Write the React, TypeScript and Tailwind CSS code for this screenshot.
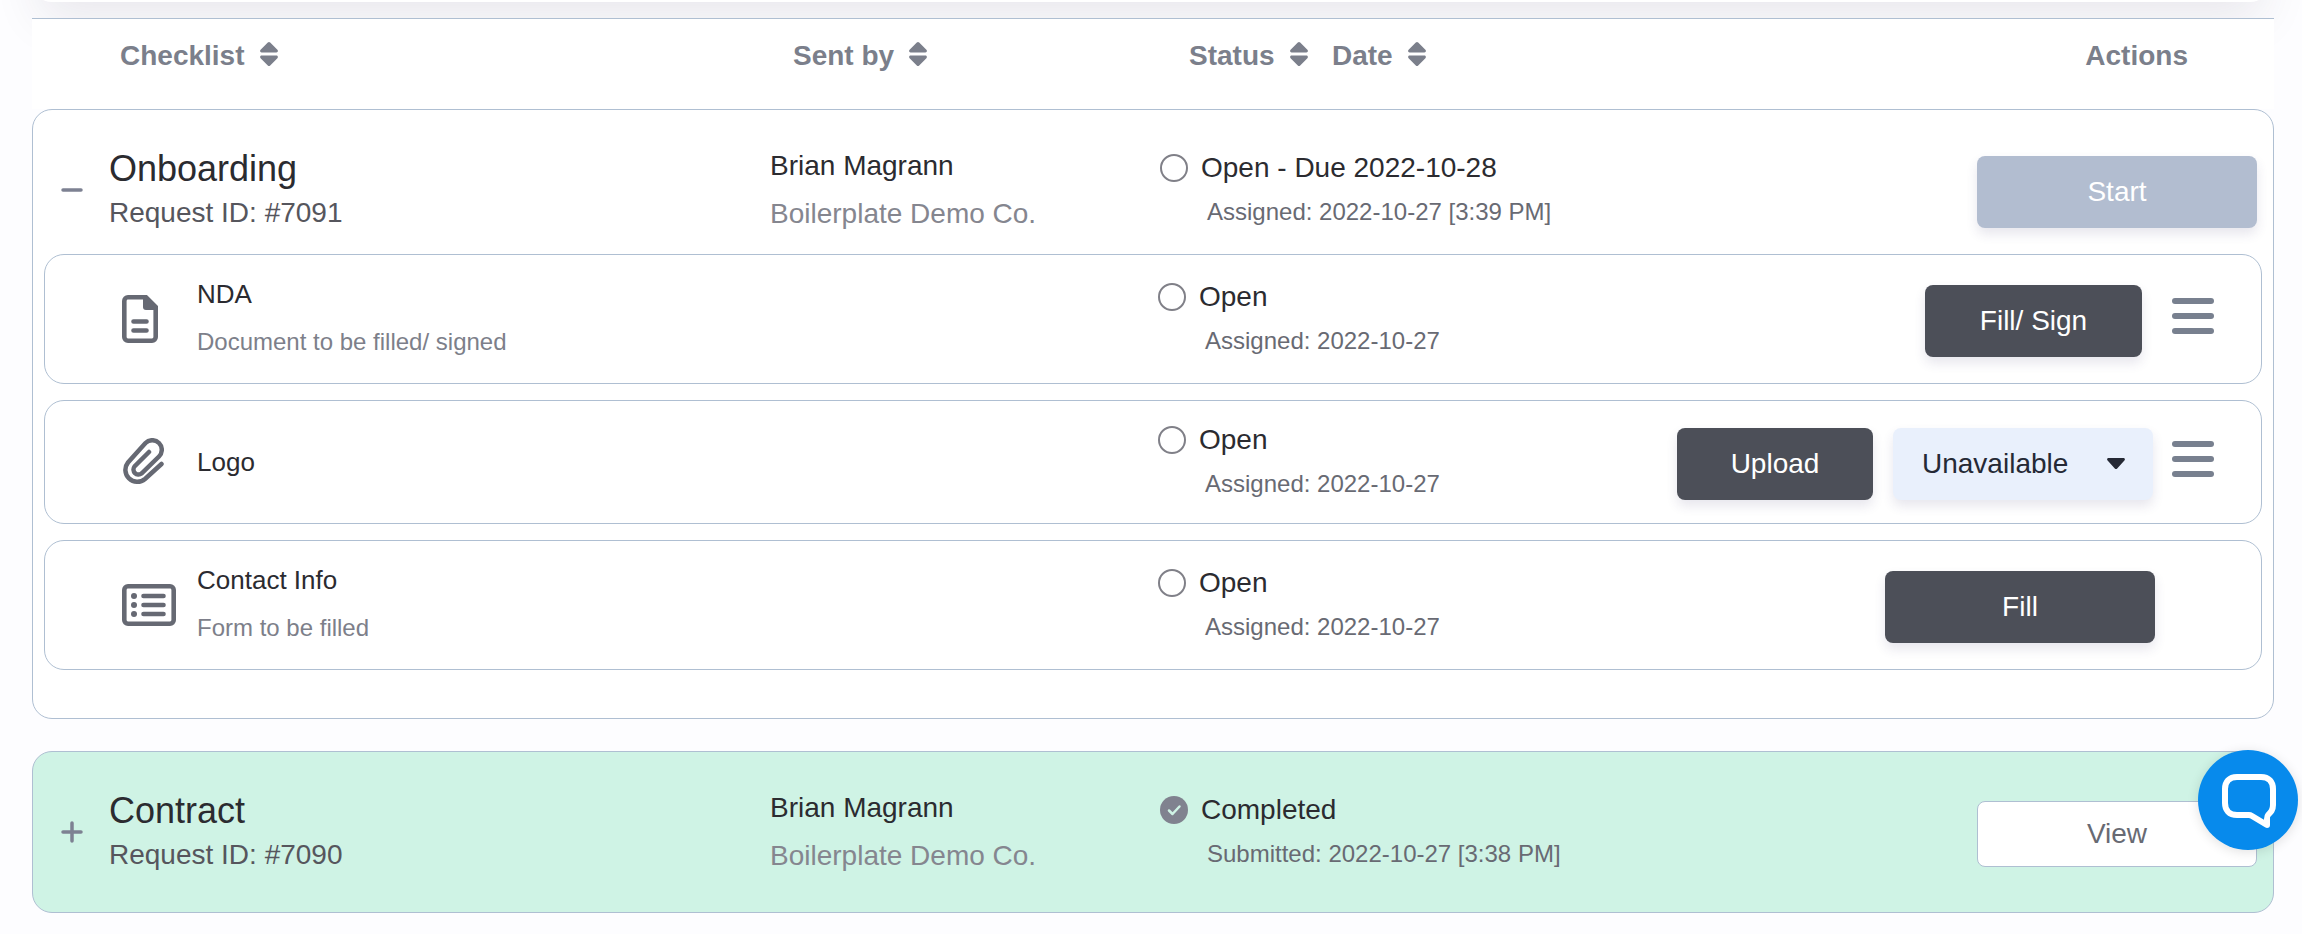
import type { ReactNode } from "react";

type Item = {
  name: string;
  note?: string;
  icon: ReactNode;
  actions: ReactNode;
};

function SortIcon() {
  return (
    <svg viewBox="0 0 18 36" className="h-9 w-[18px]" fill="currentColor" aria-hidden="true">
      <path d="M7.8 6.6a1.700 1.700 0 0 1 2.400 0l7.200 7.200c1 1 .4 2.600-1 2.600H1.600c-1.400 0-2-1.600-1-2.600z" />
      <path d="M7.800 29.400a1.700 1.700 0 0 0 2.400 0l7.200-7.200c1-1 .4-2.600-1-2.600H1.600c-1.400 0-2 1.600-1 2.600z" />
    </svg>
  );
}

function DocumentIcon() {
  return (
    <svg viewBox="0 0 36 48" className="h-12 w-9" fill="none" aria-hidden="true">
      <path d="M6 2.300h18l9.700 9.700v30a3.700 3.700 0 0 1-3.700 3.700H6A3.700 3.700 0 0 1 2.300 42V6A3.700 3.700 0 0 1 6 2.300z" stroke="currentColor" strokeWidth="4.600" />
      <path d="M21 2h4l9 9v4H24a3 3 0 0 1-3-3z" fill="currentColor" />
      <path d="M11.500 26.500h13M11.500 35.500h13" stroke="currentColor" strokeWidth="4.600" strokeLinecap="round" />
    </svg>
  );
}

function ClipIcon() {
  return (
    <svg viewBox="0 0 42 48" className="h-12 w-[42px]" fill="none" stroke="currentColor" strokeWidth="4.500" strokeLinecap="round" aria-hidden="true">
      <path d="M27 14 12.500 28.500a5 5 0 0 0 7 7L37 18.500a9.500 9.500 0 0 0-13.500-13.500L6 24.500A11.900 11.900 0 0 0 23 41l16.500-15" />
    </svg>
  );
}

function ListIcon() {
  return (
    <svg viewBox="0 0 54 42" className="h-[42px] w-[54px]" aria-hidden="true">
      <rect x="2.300" y="2.300" width="49.400" height="37.400" rx="3.700" fill="none" stroke="currentColor" strokeWidth="4.600" />
      <g fill="currentColor">
        <circle cx="12" cy="12" r="3" />
        <circle cx="12" cy="21" r="3" />
        <circle cx="12" cy="30" r="3" />
      </g>
      <path d="M21.500 12h20M21.500 21h20M21.500 30h20" stroke="currentColor" strokeWidth="4.600" strokeLinecap="round" />
    </svg>
  );
}

function DarkButton({ children, className }: { children: ReactNode; className: string }) {
  return (
    <button type="button" className={`h-[72px] rounded-lg bg-[#4c4f58] text-white shadow-[0_6px_12px_rgba(60,50,110,0.12)] ${className}`}>
      {children}
    </button>
  );
}

function MenuButton() {
  return (
    <button type="button" aria-label="More options" className="mb-[10px] flex w-[61px] flex-col items-end gap-[9px]">
      <span className="h-[6px] w-[42px] rounded-full bg-[#78808f]" />
      <span className="h-[6px] w-[42px] rounded-full bg-[#78808f]" />
      <span className="h-[6px] w-[42px] rounded-full bg-[#78808f]" />
    </button>
  );
}

function AvailabilitySelect() {
  return (
    <div className="relative ml-5">
      <select
        aria-label="Availability"
        className="h-[72px] w-[260px] appearance-none rounded-lg bg-[#e9f0fc] pl-[29px] text-[#252935] shadow-[0_6px_12px_rgba(60,50,110,0.12)]"
      >
        <option>Unavailable</option>
        <option>Available</option>
      </select>
      <svg viewBox="0 0 18 12" className="pointer-events-none absolute top-[30px] right-7 h-3 w-[18px]" fill="#252935" aria-hidden="true">
        <path d="M1.600 0h14.800c1.400 0 2 1.500 1 2.500l-7.200 8a1.700 1.700 0 0 1-2.400 0L.6 2.500C-.4 1.500.2 0 1.600 0z" />
      </svg>
    </div>
  );
}

function Status({ done, label, detail }: { done?: boolean; label: string; detail: string }) {
  return (
    <div className="whitespace-nowrap">
      <div className="flex items-center gap-[13px] leading-[44px] text-[#2b2b30]">
        {done ? (
          <svg viewBox="0 0 28 28" className="size-7" aria-hidden="true">
            <circle cx="14" cy="14" r="14" fill="#80828f" />
            <path d="m9 14.500 3.500 3.500 7-7.500" fill="none" stroke="#cff3e5" strokeWidth="2.500" strokeLinecap="round" strokeLinejoin="round" />
          </svg>
        ) : (
          <span className="size-7 rounded-full border-2 border-[#808088]" />
        )}
        {label}
      </div>
      <div className="pl-[47px] text-2xl leading-[44px] text-[#686a73]">{detail}</div>
    </div>
  );
}

const items: Item[] = [
  {
    name: "NDA",
    note: "Document to be filled/ signed",
    icon: <DocumentIcon />,
    actions: (
      <>
        <DarkButton className="mr-[11px] w-[217px]">Fill/ Sign</DarkButton>
        <MenuButton />
      </>
    ),
  },
  {
    name: "Logo",
    icon: <ClipIcon />,
    actions: (
      <>
        <DarkButton className="w-[196px]">Upload</DarkButton>
        <AvailabilitySelect />
        <MenuButton />
      </>
    ),
  },
  {
    name: "Contact Info",
    note: "Form to be filled",
    icon: <ListIcon />,
    actions: <DarkButton className="mr-[59px] w-[270px]">Fill</DarkButton>,
  },
];

function ItemRow({ item }: { item: Item }) {
  return (
    <tr className="mx-[11px] grid grid-cols-[1113fr_422fr_681fr] items-center rounded-[20px] border border-[#afbfd2] bg-white not-last:mb-4">
      <td colSpan={2} className="flex min-w-0 items-center py-4 pl-[77px]">
        <span className="w-[75px] shrink-0 text-[#666973]">{item.icon}</span>
        <div className={item.note ? "leading-[46px]" : "py-[13px] leading-[64px]"}>
          <div className="text-[26px] text-[#2b2b30]">{item.name}</div>
          {item.note && <div className="text-2xl leading-[50px] text-[#7d7f8a]">{item.note}</div>}
        </div>
      </td>
      <td colSpan={2} className="min-w-0">
        <Status label="Open" detail="Assigned: 2022-10-27" />
      </td>
      <td className="flex min-w-0 items-center justify-end pt-1 pr-[47px]">{item.actions}</td>
    </tr>
  );
}

type ChecklistRowProps = {
  title: string;
  id: string;
  open?: boolean;
  status: ReactNode;
  action: ReactNode;
};

function ChecklistRow({ title, id, open, status, action }: ChecklistRowProps) {
  return (
    <tr className="grid grid-cols-[737fr_390fr_420fr_693fr] items-start">
      <td className="flex min-w-0 items-center gap-[26px] pt-9 pb-5 pl-7">
        <button type="button" aria-label={`Toggle ${title}`} aria-expanded={!!open} className="text-[#7d8192]">
          <svg viewBox="0 0 22 22" className="size-[22px]" stroke="currentColor" strokeWidth="3.500" strokeLinecap="round" aria-hidden="true">
            <path d={open ? "M2 11h18" : "M2 11h18M11 2v18"} />
          </svg>
        </button>
        <div>
          <div className="text-4xl leading-[46px] text-[#2b2b30]">{title}</div>
          <div className="leading-[42px] text-[#56565d]">Request ID: #{id}</div>
        </div>
      </td>
      <td className="min-w-0 pt-8 leading-[48px] whitespace-nowrap">
        <div className="text-[#2b2b30]">Brian Magrann</div>
        <div className="text-[#85868f]">Boilerplate Demo Co.</div>
      </td>
      <td colSpan={2} className="min-w-0 pt-9">
        {status}
      </td>
      <td className="mt-[46px] flex h-[72px] min-w-0 items-center justify-end pr-4">{action}</td>
    </tr>
  );
}

function SortHeader({ label, className }: { label: string; className?: string }) {
  return (
    <th scope="col" className={`text-left ${className ?? ""}`}>
      <button type="button" className="flex items-start gap-[15px] leading-10 font-bold whitespace-nowrap">
        {label}
        <SortIcon />
      </button>
    </th>
  );
}

export default function App() {
  return (
    <div className="min-h-screen overflow-hidden bg-[#fdfdff] pb-5 font-['Liberation_Sans',Arial,sans-serif] text-[28px]">
      <div className="mx-8 -mt-20 mb-4 h-[82px] rounded-b-[20px] bg-white shadow-[0_24px_48px_-8px_rgba(50,40,70,0.1)]" />

      <table className="relative mx-7 block pl-1">
        <thead className="block h-[91px] border-t border-[#afbfd2] bg-white text-[#7b7f8b]">
          <tr className="grid grid-cols-[738fr_390fr_172fr_248fr_694fr] pt-[17px]">
            <SortHeader label="Checklist" className="pl-[88px]" />
            <SortHeader label="Sent by" className="pl-[23px]" />
            <SortHeader label="Status" className="pl-[29px]" />
            <SortHeader label="Date" />
            <th scope="col" className="pr-[86px] text-right leading-10">
              Actions
            </th>
          </tr>
        </thead>

        <tbody className="flex flex-col rounded-[20px] border border-[#afbfd2] bg-white pb-12">
          <ChecklistRow
            title="Onboarding"
            id="7091"
            open
            status={<Status label="Open - Due 2022-10-28" detail="Assigned: 2022-10-27 [3:39 PM]" />}
            action={
              <button type="button" className="h-[72px] w-[280px] rounded-lg bg-[#b2bdd0] text-white shadow-[0_6px_12px_rgba(60,50,110,0.12)]">
                Start
              </button>
            }
          />
          {items.map((item) => (
            <ItemRow key={item.name} item={item} />
          ))}
        </tbody>

        <tbody className="mt-8 block rounded-[20px] border border-[#afbfd2] bg-[#cff3e5] pb-4">
          <ChecklistRow
            title="Contract"
            id="7090"
            status={<Status done label="Completed" detail="Submitted: 2022-10-27 [3:38 PM]" />}
            action={
              <button type="button" className="h-[66px] w-[280px] rounded-lg border border-[#afbfd2] bg-white text-[#686a73]">
                View
              </button>
            }
          />
        </tbody>
      </table>

      <button
        type="button"
        aria-label="Open chat"
        className="fixed right-1 bottom-[84px] size-[100px] rounded-full bg-[#078aec] shadow-[0_2px_12px_rgba(0,0,0,0.12)]"
      >
        <svg viewBox="0 0 100 100" className="size-full" fill="none" stroke="#fff" strokeWidth="6" strokeLinejoin="round" aria-hidden="true">
          <path d="M39 27h24c8 0 12 5 12 12v16c0 5-2 7-5 10-1 1-1 2-1 4v6L54 66c-1-.6-2-1-3-1H39c-8 0-12-5-12-12V39c0-7 4-12 12-12z" />
        </svg>
      </button>
    </div>
  );
}
